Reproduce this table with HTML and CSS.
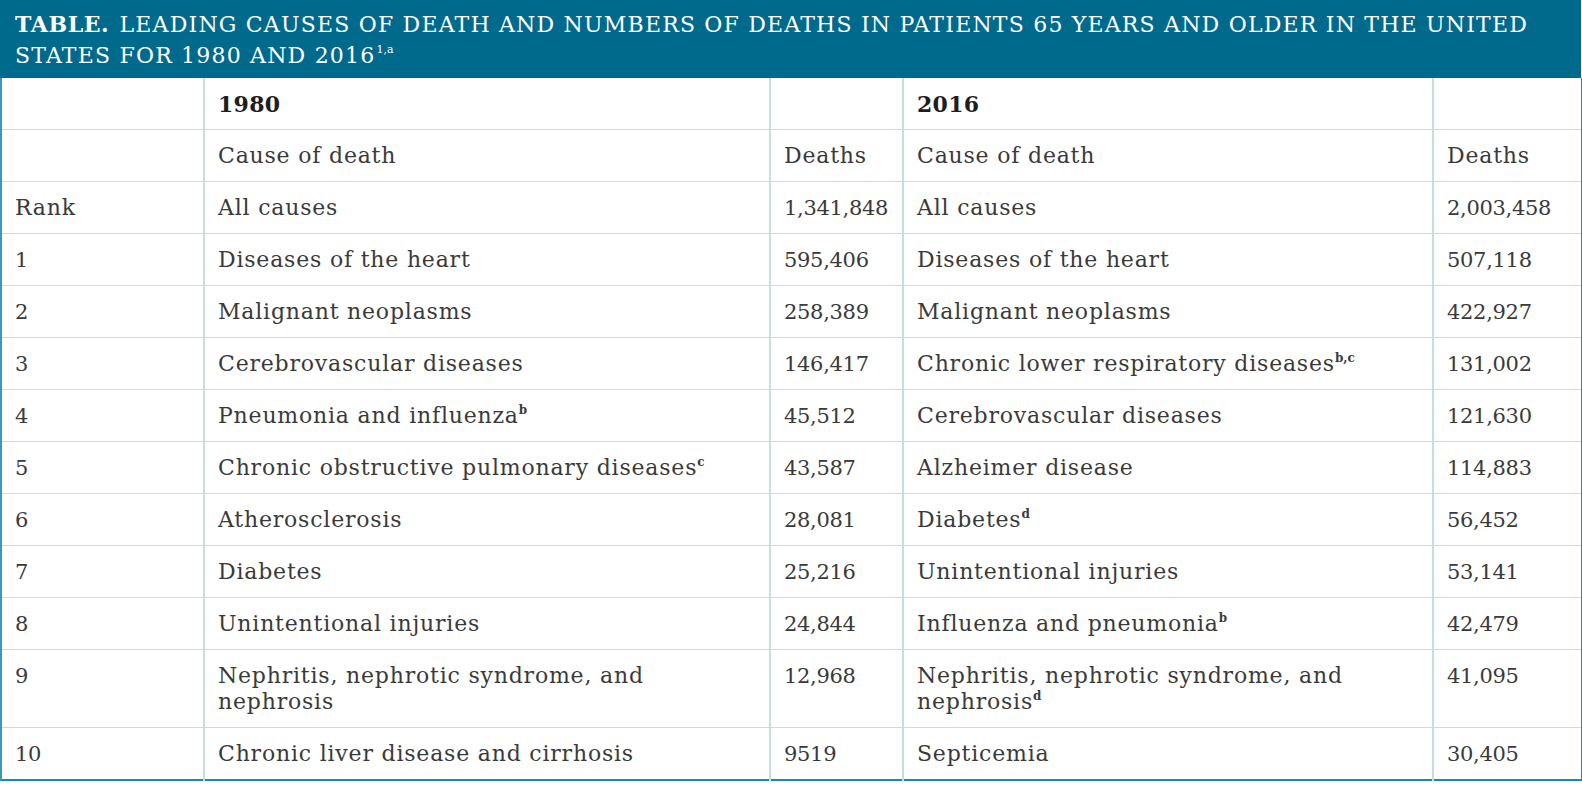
FILE: index.html
```html
<!DOCTYPE html>
<html>
<head>
<meta charset="utf-8">
<link rel="stylesheet" href="styles.css">
</head>
<body>
<div class="wrap">
  <div class="title"><b class="lead">TABLE.</b> LEADING CAUSES OF DEATH AND NUMBERS OF DEATHS IN PATIENTS 65 YEARS AND OLDER IN THE UNITED STATES FOR 1980 AND 2016<sup class="tsup">1,a</sup></div>
  <table class="data">
    <colgroup>
      <col class="c-rank"><col class="c-cause1"><col class="c-d1"><col class="c-cause2"><col class="c-d2">
    </colgroup>
    <tbody>
      <tr><td></td><td class="year">1980</td><td></td><td class="year">2016</td><td></td></tr>
      <tr><td></td><td>Cause of death</td><td>Deaths</td><td>Cause of death</td><td>Deaths</td></tr>
      <tr><td>Rank</td><td>All causes</td><td class="num">1,341,848</td><td>All causes</td><td class="num">2,003,458</td></tr>
      <tr><td class="num">1</td><td>Diseases of the heart</td><td class="num">595,406</td><td>Diseases of the heart</td><td class="num">507,118</td></tr>
      <tr><td class="num">2</td><td>Malignant neoplasms</td><td class="num">258,389</td><td>Malignant neoplasms</td><td class="num">422,927</td></tr>
      <tr><td class="num">3</td><td>Cerebrovascular diseases</td><td class="num">146,417</td><td>Chronic lower respiratory diseases<sup>b,c</sup></td><td class="num">131,002</td></tr>
      <tr><td class="num">4</td><td>Pneumonia and influenza<sup>b</sup></td><td class="num">45,512</td><td>Cerebrovascular diseases</td><td class="num">121,630</td></tr>
      <tr><td class="num">5</td><td>Chronic obstructive pulmonary diseases<sup>c</sup></td><td class="num">43,587</td><td>Alzheimer disease</td><td class="num">114,883</td></tr>
      <tr><td class="num">6</td><td>Atherosclerosis</td><td class="num">28,081</td><td>Diabetes<sup>d</sup></td><td class="num">56,452</td></tr>
      <tr><td class="num">7</td><td>Diabetes</td><td class="num">25,216</td><td>Unintentional injuries</td><td class="num">53,141</td></tr>
      <tr><td class="num">8</td><td>Unintentional injuries</td><td class="num">24,844</td><td>Influenza and pneumonia<sup>b</sup></td><td class="num">42,479</td></tr>
      <tr><td class="num">9</td><td>Nephritis, nephrotic syndrome, and nephrosis</td><td class="num">12,968</td><td>Nephritis, nephrotic syndrome, and nephrosis<sup>d</sup></td><td class="num">41,095</td></tr>
      <tr><td class="num">10</td><td>Chronic liver disease and cirrhosis</td><td class="num">9519</td><td>Septicemia</td><td class="num">30,405</td></tr>
    </tbody>
  </table>
</div>
</body>
</html>
```
FILE: styles.css
```css
html, body {
  margin: 0;
  padding: 0;
  background: #ffffff;
}
body {
  font-family: "DejaVu Serif", "Liberation Serif", serif;
  color: #3a3a3a;
}
.wrap {
  width: 1581px;
}
.title {
  background: #006a8d;
  color: #ffffff;
  height: 78px;
  box-sizing: border-box;
  padding: 9px 15px 0 15px;
  font-size: 22px;
  line-height: 31px;
  letter-spacing: 1.2px;
}
.title .lead {
  font-weight: bold;
  letter-spacing: 0.6px;
  margin-right: 2px;
}
.tsup {
  display: inline-block;
  font-size: 11px;
  line-height: 11px;
  vertical-align: 10px;
  letter-spacing: 0;
  margin-left: 1px;
}
.data {
  width: 1581px;
  border-collapse: collapse;
  table-layout: fixed;
  border-left: 2px solid #3a9ab6;
  border-right: 2px solid #1a8aa8;
  border-bottom: 2px solid #1a8aa8;
}
.c-rank { width: 203px; }
.c-cause1 { width: 566px; }
.c-d1 { width: 133px; }
.c-cause2 { width: 530px; }
.c-d2 { width: 149px; }
.data td {
  border-top: 1px solid #c3dee7;
  border-left: 2px solid #c3dee7;
  padding: 13px 8px 12px 13px;
  height: 26px;
  vertical-align: top;
  font-size: 22px;
  line-height: 26px;
  letter-spacing: 0.8px;
}
.data td.num {
  font-size: 21px;
  letter-spacing: -0.3px;
  white-space: nowrap;
}
.data tr:first-child td {
  border-top: none;
}
.data td:first-child {
  border-left: 2px solid #3a9ab6;
}
.data td.year {
  font-weight: bold;
  color: #1e1e1e;
  letter-spacing: 0.3px;
}
.data sup {
  display: inline-block;
  font-size: 12px;
  font-weight: bold;
  line-height: 12px;
  vertical-align: 9px;
  letter-spacing: 0;
  margin-left: 0;
}
```
